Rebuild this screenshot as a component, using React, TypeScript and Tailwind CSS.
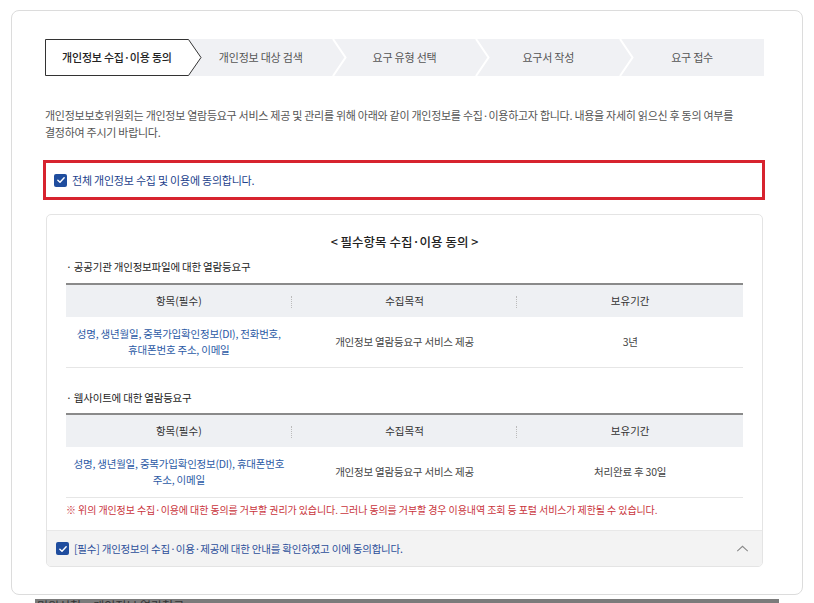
import React from "react";

const FONT = { fontFamily: '"Noto Sans CJK KR", "Noto Sans", sans-serif' };

const steps = ["개인정보 수집·이용 동의", "개인정보 대상 검색", "요구 유형 선택", "요구서 작성", "요구 접수"];

function Check() {
	return (
		<span className="flex h-[13px] w-[13px] shrink-0 items-center justify-center rounded-[2px] bg-[#1f4d9e]">
			<svg viewBox="0 0 12 12" className="h-[10px] w-[10px]" fill="none">
				<path d="M2.2 6.2 L4.8 8.7 L9.8 3.4" stroke="#fff" strokeWidth="1.7" strokeLinecap="round" strokeLinejoin="round" />
			</svg>
		</span>
	);
}

function Stepper() {
	return (
		<div className="flex h-[37px] w-[719px] bg-[#f0f1f4]">
			{steps.map((s, i) => (
				<div key={s} className="relative flex flex-1 items-center justify-center">
					{i === 0 && (
						<svg className="absolute left-0 top-0 z-10 h-[37px] w-[158px]" viewBox="0 0 158 37">
							<polygon points="0.5,0.5 143.5,0.5 156,18.5 143.5,36.5 0.5,36.5" fill="#fff" stroke="#333" strokeWidth="1" />
						</svg>
					)}
					{i > 0 && i < 4 && (
						<svg className="absolute right-[-14px] top-0 z-10 h-[37px] w-[15px]" viewBox="0 0 15 37">
							<polyline points="1,0 13.5,18.5 1,37" fill="none" stroke="#fff" strokeWidth="2" />
						</svg>
					)}
					<span className={`relative z-20 text-[11px] tracking-[-0.02em] ${i === 0 ? "text-[#222] font-medium" : "text-[#555]"}`}>
						{s}
					</span>
				</div>
			))}
		</div>
	);
}

type Row = { items: string[]; purpose: string; period: string };

function InfoTable({ row }: { row: Row }) {
	return (
		<div className="border-t-2 border-[#8a8a8a] border-b border-b-[#e6e6e6]">
			<div className="grid h-[32px] grid-cols-3 items-center bg-[#eef0f3] text-[10.5px] text-[#333]">
				<div className="relative text-center">
					항목(필수)
					<span className="absolute right-0 top-[3px] h-[12px] border-r border-dotted border-[#bbb]" />
				</div>
				<div className="relative text-center">
					수집목적
					<span className="absolute right-0 top-[3px] h-[12px] border-r border-dotted border-[#bbb]" />
				</div>
				<div className="text-center">보유기간</div>
			</div>
			<div className="grid h-[50px] grid-cols-3 items-center text-[10.5px] leading-[16px] tracking-[-0.02em]">
				<div className="text-center text-[#2c5aa5]">
					{row.items.map((l) => (
						<div key={l}>{l}</div>
					))}
				</div>
				<div className="text-center text-[#444]">{row.purpose}</div>
				<div className="text-center text-[#444]">{row.period}</div>
			</div>
		</div>
	);
}

export default function App() {
	return (
		<div className="min-h-[603px] bg-white pt-[10px]" style={FONT}>
			<div className="mx-[11px] w-[792px] rounded-[8px] border border-[#dcdcdc] px-[33px] pb-[27px] pt-[28px]">
				<Stepper />

				<p className="mt-[31px] text-[11px] leading-[17px] text-[#555] tracking-[-0.025em]">
					개인정보보호위원회는 개인정보 열람등요구 서비스 제공 및 관리를 위해 아래와 같이 개인정보를 수집·이용하고자 합니다. 내용을 자세히 읽으신 후 동의 여부를
					<br />
					결정하여 주시기 바랍니다.
				</p>

				<div className="ml-[-2px] mt-[19px] flex h-[40px] w-[722px] items-center gap-[5px] border-[3px] border-[#d7232f] pl-[8px]">
					<Check />
					<span className="text-[11px] text-[#1d3f8c] tracking-[-0.02em]">전체 개인정보 수집 및 이용에 동의합니다.</span>
				</div>

				<div className="ml-[1px] mt-[14px] w-[717px] overflow-hidden rounded-[5px] border border-[#e4e4e4]">
					<div className="px-[19px] pb-[13px] pt-[18px]">
						<h3 className="text-center text-[12.5px] font-medium text-[#222]">&lt; 필수항목 수집·이용 동의 &gt;</h3>
						<p className="mt-[7px] text-[10.5px] text-[#222] tracking-[-0.02em]">· 공공기관 개인정보파일에 대한 열람등요구</p>
						<div className="mt-[8px]">
							<InfoTable
								row={{
									items: ["성명, 생년월일, 중복가입확인정보(DI), 전화번호,", "휴대폰번호 주소, 이메일"],
									purpose: "개인정보 열람등요구 서비스 제공",
									period: "3년",
								}}
							/>
						</div>
						<p className="mt-[22px] text-[10.5px] text-[#222] tracking-[-0.02em]">· 웹사이트에 대한 열람등요구</p>
						<div className="mt-[8px]">
							<InfoTable
								row={{
									items: ["성명, 생년월일, 중복가입확인정보(DI), 휴대폰번호", "주소, 이메일"],
									purpose: "개인정보 열람등요구 서비스 제공",
									period: "처리완료 후 30일",
								}}
							/>
						</div>
						<p className="mt-[4px] text-[10px] text-[#c9343c] tracking-[-0.01em]">
							※ 위의 개인정보 수집·이용에 대한 동의를 거부할 권리가 있습니다. 그러나 동의를 거부할 경우 이용내역 조회 등 포털 서비스가 제한될 수 있습니다.
						</p>
					</div>
					<div className="flex h-[36px] items-center gap-[5px] border-t border-[#e8e8e8] bg-[#f3f3f3] pl-[9px] pr-[13px]">
						<Check />
						<span className="flex-1 text-[10.5px] text-[#2c4f9a] tracking-[-0.02em]">[필수] 개인정보의 수집·이용·제공에 대한 안내를 확인하였고 이에 동의합니다.</span>
						<svg viewBox="0 0 14 8" className="h-[7px] w-[13px]" fill="none">
							<polyline points="1,7 7,1.5 13,7" stroke="#888" strokeWidth="1.2" />
						</svg>
					</div>
				</div>
			</div>
			<div className="mx-[35px] mt-[4px] h-[30px] bg-[#7b7b7b] px-[2px] text-[12px] leading-[14px] text-[#333]">
				민원신청 &gt; 개인정보 열람청구
			</div>
		</div>
	);
}
